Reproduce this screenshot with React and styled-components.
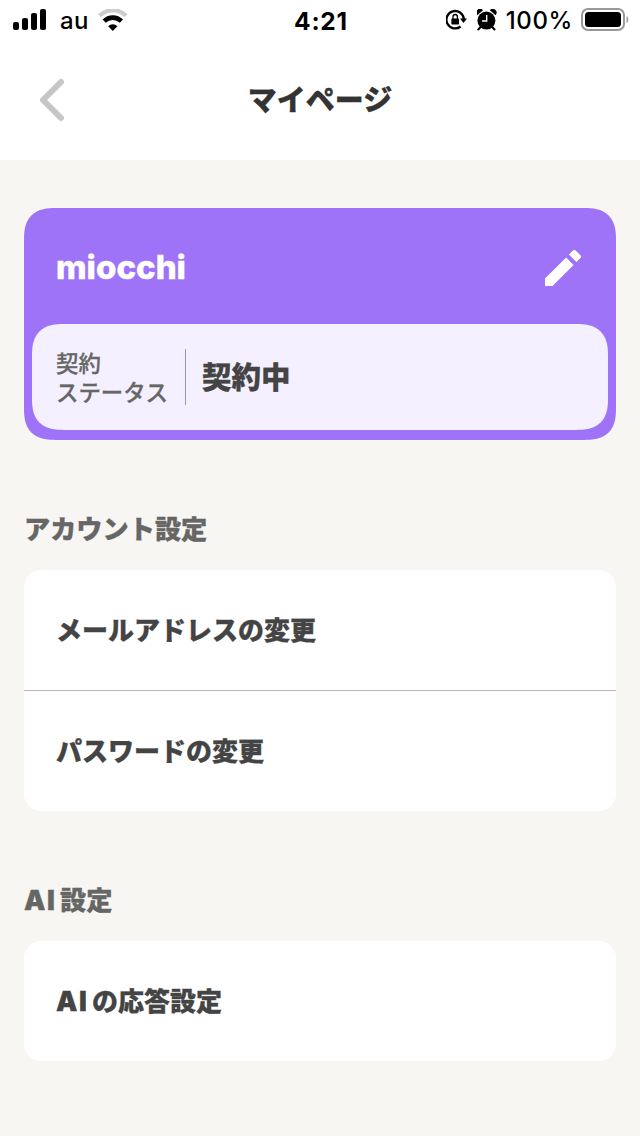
import styled, { createGlobalStyle } from 'styled-components';

const GlobalStyle = createGlobalStyle`
  * {
    box-sizing: border-box;
  }
  body {
    margin: 0;
    background: #f7f6f2;
    color: #444;
    font-family: Inter, 'Noto Sans CJK JP', sans-serif;
  }
  h1, h2, p {
    margin: 0;
  }
`;

const Page = styled.div`
  width: 640px;
  min-height: 1136px;
  background: #f7f6f2;
`;

const StatusBar = styled.div`
  display: grid;
  grid-template-columns: 1fr auto 1fr;
  align-items: center;
  height: 40px;
  padding: 0 11px 0 13px;
  background: #fff;
  color: #000;
  line-height: 38px;
`;

const StatusGroup = styled.div`
  display: flex;
  align-items: center;
  justify-content: ${({ $end }) => ($end ? 'flex-end' : 'flex-start')};
  height: 40px;

  svg {
    display: block;
    flex: none;
  }
`;

const Carrier = styled.span`
  margin: 0 9px 0 13px;
  padding-top: 2px;
  font-size: 24px;
  font-weight: 500;
  letter-spacing: 0.3px;
`;

const Clock = styled.span`
  padding-top: 1px;
  font-size: 24.5px;
  font-weight: 700;
  letter-spacing: 0.8px;
`;

const Percent = styled.span`
  margin: 0 8px 0 9px;
  padding-top: 2px;
  font-size: 24px;
  font-weight: 500;
  letter-spacing: 0.6px;
`;

const StatusIcons = styled.span`
  display: flex;
  gap: 9px;
`;

const Header = styled.header`
  display: grid;
  grid-template-columns: 80px 1fr 80px;
  align-items: center;
  height: 120px;
  background: #fff;
`;

const BackButton = styled.button`
  display: flex;
  padding: 0 0 0 38px;
  border: 0;
  background: none;
`;

const Title = styled.h1`
  padding-top: 2px;
  color: #333;
  font-size: 29px;
  font-weight: 900;
  line-height: 40px;
  text-align: center;
  -webkit-text-stroke: 0.3px #333;
`;

const Content = styled.main`
  padding: 48px 24px 0;
`;

const ProfileCard = styled.section`
  height: 232px;
  padding: 0 8px;
  border-radius: 32px;
  corner-shape: superellipse(1.4);
  background: #9e73f8;
`;

const ProfileTop = styled.div`
  display: flex;
  align-items: center;
  justify-content: space-between;
  height: 116px;
  padding: 2px 21px 0 24px;
`;

const UserName = styled.p`
  color: #fff;
  font-size: 33px;
  font-weight: 800;
  line-height: 40px;
  -webkit-text-stroke: 0.4px #fff;
`;

const EditButton = styled.button`
  display: flex;
  padding: 2px 0 0;
  border: 0;
  background: none;
`;

const StatusPanel = styled.div`
  display: flex;
  align-items: center;
  height: 106px;
  padding-left: 24px;
  border-radius: 32px;
  corner-shape: superellipse(1.4);
  background: #f5f0ff;
`;

const StatusLabel = styled.p`
  width: 130px;
  height: 56px;
  border-right: 1px solid #9d93bd;
  color: #666;
  font-size: 22.4px;
  font-weight: 500;
  line-height: 29px;
  white-space: nowrap;
  -webkit-text-stroke: 0.3px #666;
`;

const StatusValue = styled.p`
  padding-left: 16px;
  font-size: 29.5px;
  font-weight: 900;
  line-height: 40px;
  -webkit-text-stroke: 0.3px #444;
`;

const Section = styled.section`
  padding-top: 70px;
`;

const SectionTitle = styled.h2`
  height: 60px;
  color: #666;
  font-size: 26.2px;
  font-weight: 900;
  line-height: 40px;
  -webkit-text-stroke: 0.3px #666;
`;

const Menu = styled.div`
  overflow: hidden;
  border-radius: 17px;
  background: #fff;
`;

const MenuItem = styled.div`
  display: flex;
  align-items: center;
  height: 120px;
  padding: 2px 32px 0;
  font-size: 26px;
  font-weight: 900;
  line-height: 40px;
  -webkit-text-stroke: 0.3px #444;

  & + & {
    height: 121px;
    border-top: 1px solid #bbb;
  }
`;

const Latin = styled.span`
  margin-right: 3.5px;
  font-size: 27px;
  font-weight: 900;
  letter-spacing: 1.6px;
`;

const sections = [
  { title: 'アカウント設定', items: ['メールアドレスの変更', 'パスワードの変更'] },
  { title: 'AI設定', items: ['AIの応答設定'] },
];

function Label({ text }) {
  if (!text.startsWith('AI')) return text;
  return (
    <span>
      <Latin>AI</Latin>
      {text.slice(2)}
    </span>
  );
}

function SignalIcon() {
  return (
    <svg width="34" height="22" viewBox="0 0 34 22">
      <rect x="0" y="13" width="6" height="8" rx="2" />
      <rect x="9" y="9" width="6" height="12" rx="2" />
      <rect x="18" y="4" width="6" height="17" rx="2" />
      <rect x="27" y="0" width="6" height="21" rx="2" />
    </svg>
  );
}

function WifiIcon() {
  return (
    <svg width="30" height="22" viewBox="0 0 30 22">
      <path d="M1.5 6.8a18.8 18.8 0 0 1 26.6 0" fill="none" stroke="#ccc" strokeWidth="4.2" />
      <path d="M6.2 12.2a12.1 12.1 0 0 1 17.2 0" fill="none" stroke="#000" strokeWidth="4.6" />
      <path d="M10.2 17.2a6.4 6.4 0 0 1 9.2 0L14.8 22z" />
    </svg>
  );
}

function RotationLockIcon() {
  return (
    <svg width="22" height="22" viewBox="0 0 22 22">
      <path d="M14.6 17.5A8.7 8.7 0 1 1 17.8 10" fill="none" stroke="#000" strokeWidth="2.3" />
      <path d="M14 9.4h7l-3.5 4.7z" />
      <rect x="5.4" y="9.6" width="7.6" height="6" rx="0.8" />
      <path d="M7 10V7.7a2.2 2.2 0 0 1 4.4 0V10" fill="none" stroke="#000" strokeWidth="1.3" />
    </svg>
  );
}

function AlarmIcon() {
  return (
    <svg width="20" height="22" viewBox="0 0 20 22">
      <circle cx="9.4" cy="11.6" r="9" />
      <path d="M0.2 6.2A3.8 3.8 0 0 1 6 1.2zM18.6 6.2a3.8 3.8 0 0 0-5.8-5z" />
      <path d="M4 17.5l-2.7 3M14.8 17.5l2.7 3" stroke="#000" strokeWidth="2" strokeLinecap="round" />
      <path d="M9.7 6v6H5" fill="none" stroke="#fff" strokeWidth="1.4" />
    </svg>
  );
}

function BatteryIcon() {
  return (
    <svg width="48" height="24" viewBox="0 0 48 24">
      <rect x="1" y="1" width="42" height="21" rx="6" fill="none" stroke="#999" strokeWidth="2" />
      <rect x="4" y="4" width="36" height="15" rx="3.5" />
      <path d="M45.5 8v7.2c2.4-1.2 2.4-6 0-7.2z" fill="#999" />
    </svg>
  );
}

function App() {
  return (
    <Page>
      <GlobalStyle />
      <StatusBar>
        <StatusGroup>
          <SignalIcon />
          <Carrier>au</Carrier>
          <WifiIcon />
        </StatusGroup>
        <Clock>4:21</Clock>
        <StatusGroup $end>
          <StatusIcons>
            <RotationLockIcon />
            <AlarmIcon />
          </StatusIcons>
          <Percent>100%</Percent>
          <BatteryIcon />
        </StatusGroup>
      </StatusBar>
      <Header>
        <BackButton aria-label="戻る">
          <svg width="28" height="44" viewBox="0 0 28 44">
            <path d="M23 4L5 22l18 18" fill="none" stroke="#c6c6c6" strokeWidth="6" strokeLinecap="round" strokeLinejoin="round" />
          </svg>
        </BackButton>
        <Title>マイページ</Title>
      </Header>
      <Content>
        <ProfileCard>
          <ProfileTop>
            <UserName>miocchi</UserName>
            <EditButton aria-label="編集">
              <svg width="48" height="48" viewBox="0 0 24 24" fill="#fff">
                <path d="M3 17.25V21h3.75L17.3 10.45l-3.75-3.75zM20.71 7.04a1 1 0 0 0 0-1.41l-2.34-2.34a1 1 0 0 0-1.41 0l-2 2 3.75 3.75z" />
              </svg>
            </EditButton>
          </ProfileTop>
          <StatusPanel>
            <StatusLabel>契約<br />ステータス</StatusLabel>
            <StatusValue>契約中</StatusValue>
          </StatusPanel>
        </ProfileCard>
        {sections.map((section) => (
          <Section key={section.title}>
            <SectionTitle><Label text={section.title} /></SectionTitle>
            <Menu>
              {section.items.map((item) => (
                <MenuItem key={item}><Label text={item} /></MenuItem>
              ))}
            </Menu>
          </Section>
        ))}
      </Content>
    </Page>
  );
}

export default App;
